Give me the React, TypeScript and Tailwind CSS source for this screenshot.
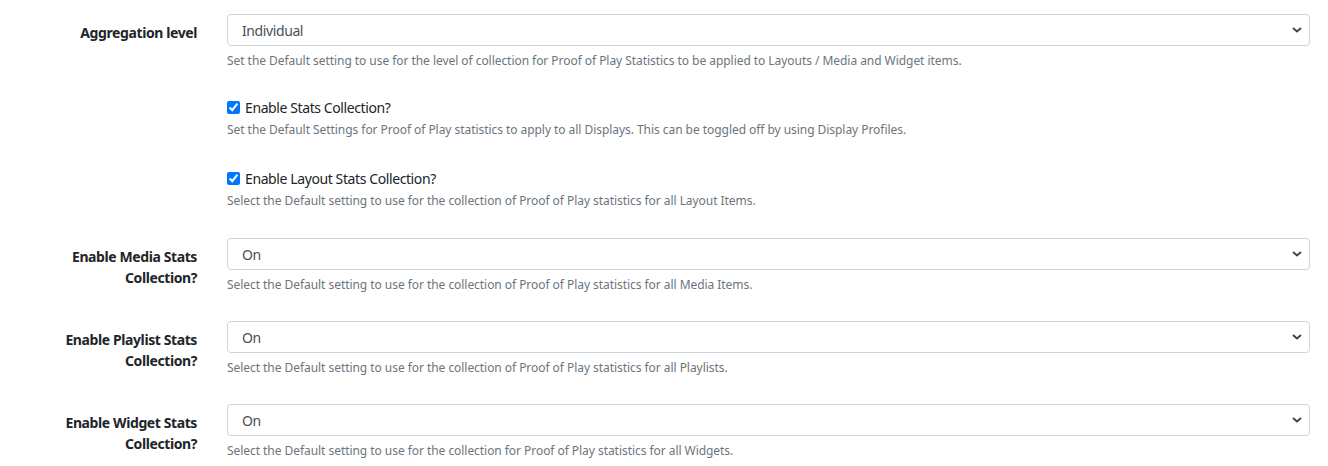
import React from "react";

const font = { fontFamily: '"Noto Sans", "Open Sans", sans-serif' };

function Chevron() {
  return (
    <svg width="10" height="6" viewBox="0 0 10 6" className="absolute right-[7px] top-1/2 -translate-y-1/2">
      <path d="M1 1 L5 4.5 L9 1" fill="none" stroke="#3c4043" strokeWidth="1.8" />
    </svg>
  );
}

function Select({ value }: { value: string }) {
  return (
    <div className="relative h-[32px] w-full rounded-[4px] border border-[#ced4da] bg-white">
      <div className="flex h-full items-center pl-[14px] text-[14px] tracking-[-0.4px] text-[#495057]">{value}</div>
      <Chevron />
    </div>
  );
}

function Help({ children }: { children: React.ReactNode }) {
  return <div className="mt-[6px] text-[12px] leading-[18px] tracking-[-0.05px] text-[#6c757d]">{children}</div>;
}

function SelectRow({ label, value, help }: { label: React.ReactNode; value: string; help: string }) {
  return (
    <div className="mb-[27px] flex">
      <div className="w-[212px] shrink-0 pl-[15px] pr-[15px] pt-[8px] text-right text-[14px] font-bold leading-[21px] tracking-[-0.4px] text-[#212529]">
        {label}
      </div>
      <div className="flex-1 px-[15px]">
        <Select value={value} />
        <Help>{help}</Help>
      </div>
    </div>
  );
}

function CheckRow({ label, help, last }: { label: string; help: string; last?: boolean }) {
  return (
    <div className={last ? "mb-[28px] flex" : "mb-[29px] flex"}>
      <div className="w-[212px] shrink-0" />
      <div className="flex-1 px-[15px]">
        <label className="flex items-center text-[14px] leading-[21px] tracking-[-0.4px] text-[#212529]">
          <input type="checkbox" defaultChecked className="m-0 mr-[5px] h-[13px] w-[13px] accent-[#0075ff]" />
          {label}
        </label>
        <div className="mt-[3px] text-[12px] leading-[18px] tracking-[-0.05px] text-[#6c757d]">{help}</div>
      </div>
    </div>
  );
}

export default function App() {
  return (
    <div className="min-h-[466px] w-[1328px] bg-white pt-[14px] pr-[3px]" style={font}>
      <SelectRow
        label="Aggregation level"
        value="Individual"
        help="Set the Default setting to use for the level of collection for Proof of Play Statistics to be applied to Layouts / Media and Widget items."
      />
      <CheckRow
        label="Enable Stats Collection?"
        help="Set the Default Settings for Proof of Play statistics to apply to all Displays. This can be toggled off by using Display Profiles."
      />
      <CheckRow
        label="Enable Layout Stats Collection?"
        help="Select the Default setting to use for the collection of Proof of Play statistics for all Layout Items."
        last
      />
      <SelectRow
        label="Enable Media Stats Collection?"
        value="On"
        help="Select the Default setting to use for the collection of Proof of Play statistics for all Media Items."
      />
      <SelectRow
        label="Enable Playlist Stats Collection?"
        value="On"
        help="Select the Default setting to use for the collection of Proof of Play statistics for all Playlists."
      />
      <SelectRow
        label="Enable Widget Stats Collection?"
        value="On"
        help="Select the Default setting to use for the collection for Proof of Play statistics for all Widgets."
      />
    </div>
  );
}
